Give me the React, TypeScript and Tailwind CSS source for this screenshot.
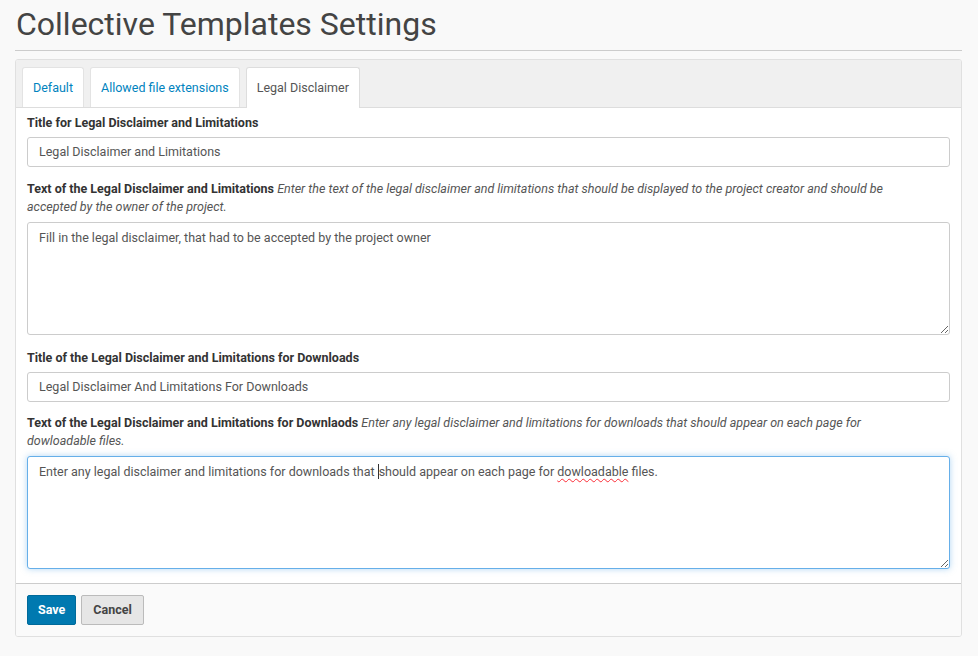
import React from 'react';

const font = { fontFamily: 'Roboto, "Liberation Sans", sans-serif' };

function Label({ title, hint }: { title: string; hint?: string }) {
  return (
    <div className="pr-[40px] text-[12.5px] leading-[18px] text-[#333]">
      <span className="font-bold">{title}</span>
      {hint && <span className="italic text-[#555]"> {hint}</span>}
    </div>
  );
}

function Field({ value }: { value: string }) {
  return (
    <div className="mt-[5px] h-[30px] rounded-[3px] border border-[#ccc] bg-white px-[11px] text-[12.5px] leading-[28px] text-[#555]">
      {value}
    </div>
  );
}

function Area({ children, focused }: { children: React.ReactNode; focused?: boolean }) {
  return (
    <div
      className={`mt-[6px] h-[113px] resize-y overflow-auto rounded-[3px] border bg-white px-[11px] py-[6px] text-[12.5px] leading-[18px] text-[#555] ${
        focused ? 'border-[#66afe9] shadow-[0_0_6px_rgba(102,175,233,0.5)]' : 'border-[#ccc]'
      }`}
    >
      {children}
    </div>
  );
}

export default function App() {
  return (
    <div className="min-h-[656px] bg-[#f9f9f9] px-[15px] pt-[3px]" style={font}>
      <h1 className="pl-[1px] text-[32px] font-normal leading-[42px] text-[#444]">Collective Templates Settings</h1>
      <div className="mt-[5px] w-[947px] border-t border-[#ccc]" />

      <div className="mt-[8px] w-[947px] overflow-hidden rounded-[3px] border border-[#e0e0e0] bg-white">
        {/* tabs */}
        <div className="flex gap-[6px] border-b border-[#ddd] bg-[#f0f0f0] px-[6px] pt-[7px]">
          <div className="rounded-t-[3px] border border-b-0 border-[#e3e3e3] bg-white px-[10px] text-[12.5px] leading-[39px] text-[#0083be]">Default</div>
          <div className="rounded-t-[3px] border border-b-0 border-[#e3e3e3] bg-white px-[10px] text-[12.5px] leading-[39px] text-[#0083be]">Allowed file extensions</div>
          <div className="-mb-px rounded-t-[3px] border border-b-0 border-[#ddd] bg-white px-[10px] text-[12.5px] leading-[40px] text-[#555]">Legal Disclaimer</div>
        </div>

        {/* form */}
        <div className="px-[11px] pb-[14px] pt-[6px]">
          <Label title="Title for Legal Disclaimer and Limitations" />
          <Field value="Legal Disclaimer and Limitations" />

          <div className="mt-[13px]">
            <Label
              title="Text of the Legal Disclaimer and Limitations"
              hint="Enter the text of the legal disclaimer and limitations that should be displayed to the project creator and should be accepted by the owner of the project."
            />
            <Area>Fill in the legal disclaimer, that had to be accepted by the project owner</Area>
          </div>

          <div className="mt-[14px]">
            <Label title="Title of the Legal Disclaimer and Limitations for Downloads" />
            <Field value="Legal Disclaimer And Limitations For Downloads" />
          </div>

          <div className="mt-[12px]">
            <Label
              title="Text of the Legal Disclaimer and Limitations for Downlaods"
              hint="Enter any legal disclaimer and limitations for downloads that should appear on each page for dowloadable files."
            />
            <Area focused>
              Enter any legal disclaimer and limitations for downloads that{' '}
              <span className="border-l border-[#333]">should</span> appear on each page for{' '}
              <span className="underline decoration-red-500 decoration-wavy decoration-1 underline-offset-2">dowloadable</span> files.
            </Area>
          </div>
        </div>

        {/* footer */}
        <div className="flex gap-[5px] border-t border-[#ccc] bg-[#fafafa] px-[11px] pb-[11px] pt-[11px]">
          <button className="h-[30px] rounded-[2px] border border-[#006a9a] bg-[#0079b0] px-[10px] text-[12.5px] font-bold text-white">Save</button>
          <button className="h-[30px] rounded-[2px] border border-[#bbb] bg-[#e6e6e6] px-[11px] text-[12.5px] font-bold text-[#444]">Cancel</button>
        </div>
      </div>
    </div>
  );
}
